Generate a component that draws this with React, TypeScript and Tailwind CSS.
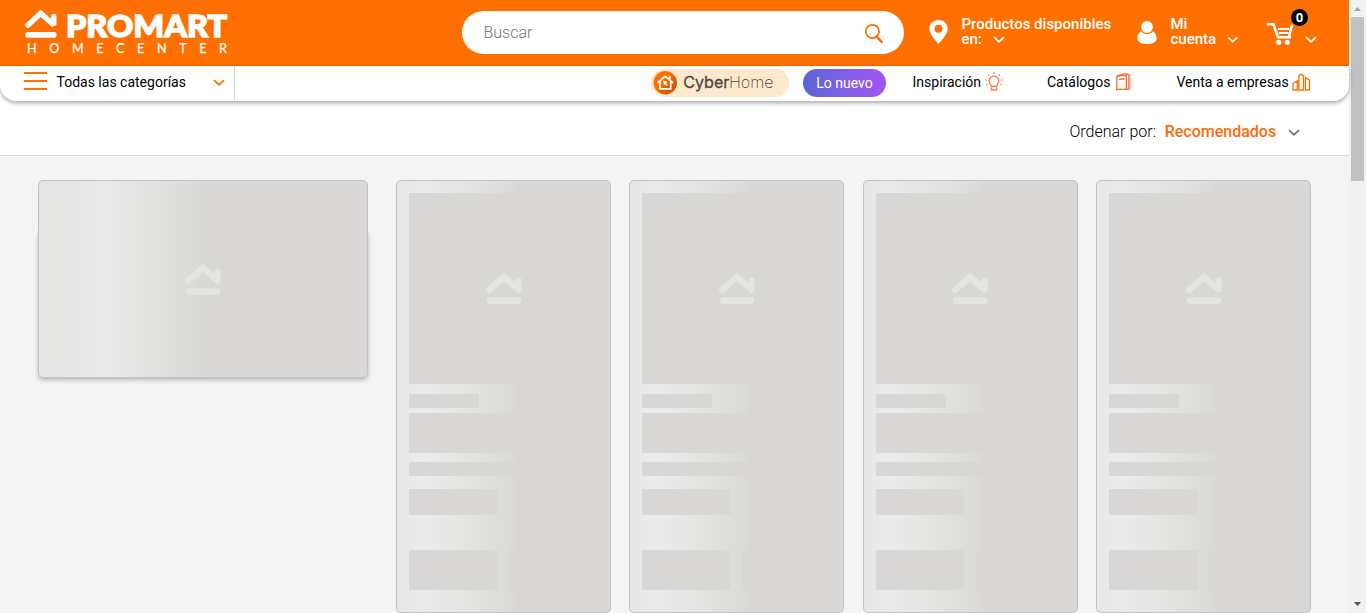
import React from "react";

function Chevron({ className = "" }: { className?: string }) {
  return (
    <svg className={className} width="12" height="8" viewBox="0 0 12 8" fill="none" stroke="currentColor" strokeWidth="1.8">
      <path d="M1 1.2 6 5.7l5-4.5" />
    </svg>
  );
}

function HouseMark({ className = "" }: { className?: string }) {
  return (
    <svg className={className} width="36" height="33" viewBox="0 0 36 33" fill="none" stroke="currentColor">
      <path d="M3.2 17.8 18 5l14.6 12.6V8.6" strokeWidth="6.4" strokeLinecap="round" strokeLinejoin="round" />
      <path d="M13 5.6 18 .8l5 4.8Z" fill="currentColor" stroke="none" />
      <path d="M4.2 28.6h27.6" strokeWidth="6.8" strokeLinecap="round" />
    </svg>
  );
}

function Logo() {
  return (
    <svg className="mt-[8px] ml-[24px] block" width="212" height="54" viewBox="0 0 212 54">
      <g fill="none" stroke="#fff" strokeLinecap="round">
        <path d="M3.8 17.2 16.7 5.2l13.1 11.8V8.4" strokeWidth="5.4" strokeLinejoin="miter" strokeMiterlimit="2" />
        <path d="M4.2 26.9h25.6" strokeWidth="5.6" />
      </g>
      <text x="42" y="28.6" fill="#fff" stroke="#fff" strokeWidth="1.4" fontFamily="Lato, sans-serif" fontWeight="900" fontSize="29.5" textLength="161" lengthAdjust="spacingAndGlyphs">PROMART</text>
      <text x="3" y="44.8" fill="#fff" stroke="#fff" strokeWidth=".25" fontFamily="Lato, sans-serif" fontWeight="400" fontSize="12.6" textLength="200" lengthAdjust="spacing">HOMECENTER</text>
    </svg>
  );
}

function Header() {
  return (
    <header className="flex h-[66px] border-b border-[#ec6500] bg-[#ff7000] text-white">
      <div className="w-[462px]"><Logo /></div>
      <div className="mt-[11px] flex h-[43px] w-[442px] justify-between rounded-full bg-white pt-[10px] pr-[20px] pl-[21.5px]">
        <span className="text-[16px] leading-[24px] font-light text-[#757575]">Buscar</span>
        <svg className="mt-[2px]" width="20" height="22" viewBox="0 0 20 22" fill="none" stroke="#ff7000">
          <circle cx="8.4" cy="8.4" r="6.6" strokeWidth="1.8" />
          <path d="m12.5 13.6 5.2 5.2" strokeWidth="2.6" strokeLinecap="round" />
        </svg>
      </div>
      <svg className="mt-[20px] ml-[25px]" width="19" height="24" viewBox="0 0 19 24" fill="#fff">
        <path fillRule="evenodd" d="M9.5 0C4.2 0 .3 3.8.3 8.8c0 5.3 6.5 12 9.2 15.2 2.7-3.2 9.2-9.9 9.2-15.2C18.7 3.8 14.8 0 9.5 0Zm0 4.7a4 4 0 1 1 0 8 4 4 0 0 1 0-8Z" />
      </svg>
      <div className="mt-[17px] ml-[13.5px] w-[174.5px] text-[15px] leading-[15px] font-medium">
        <div className="whitespace-nowrap">Productos disponibles</div>
        <div className="flex">en:<Chevron className="mt-[4px] ml-[11px]" /></div>
      </div>
      <svg className="mt-[21px] ml-[1px]" width="20" height="23" viewBox="0 0 20 23" fill="#fff">
        <ellipse cx="10" cy="6" rx="5.9" ry="6" />
        <path d="M4 10.2C1.8 11.6.3 14.6.3 17.2.3 20.8 4.5 23 10 23s9.7-2.2 9.7-5.8c0-2.6-1.5-5.6-3.7-7-1.4 1.8-3.5 2.9-6 2.9s-4.6-1.1-6-2.9Z" />
      </svg>
      <div className="mt-[17px] ml-[13.5px] w-[67.5px] text-[15px] leading-[15px] font-medium">
        <div>Mi</div>
        <div className="flex">cuenta<Chevron className="mt-[4px] ml-[10.5px]" /></div>
      </div>
      <div className="relative mt-[22px] ml-[28px] flex h-[25px]">
        <svg width="29" height="24" viewBox="0 0 29 24" fill="none" stroke="#fff">
          <path d="M2 2.2h5.5l4.5 13h12" strokeWidth="2.6" strokeLinecap="round" strokeLinejoin="round" />
          <path d="M25.8 3.6 23 15" strokeWidth="2.6" strokeLinecap="round" />
          <path d="M12 7h11M13 11h9.5" strokeWidth="1.9" />
          <circle cx="12.8" cy="20.3" r="2.6" fill="#fff" stroke="none" />
          <circle cx="21.3" cy="20.3" r="2.6" fill="#fff" stroke="none" />
        </svg>
        <span className="absolute -top-[13px] left-[25px] flex h-[17px] w-[17px] items-center justify-center rounded-full bg-black text-[13px] leading-none font-bold">0</span>
        <Chevron className="mt-[14px] ml-[10px]" />
      </div>
    </header>
  );
}

function CyberHome() {
  return (
    <svg className="mt-[3px]" width="138" height="28" viewBox="0 0 138 28">
      <defs>
        <linearGradient id="disc" x1="0" y1="0" x2="1" y2="1">
          <stop offset=".45" stopColor="#ff7000" /><stop offset=".6" stopColor="#e06000" /><stop offset="1" stopColor="#c45000" />
        </linearGradient>
      </defs>
      <rect width="138" height="28" rx="14" fill="#ffe8cc" />
      <circle cx="14.3" cy="13.7" r="11.7" fill="url(#disc)" />
      <path d="m7 13.5 7.3-6.4 7.3 6.4M9 12.5v7.4h10.7v-7.4M18.8 10V7.6" fill="none" stroke="#fff" strokeWidth="1.7" strokeLinecap="round" strokeLinejoin="round" />
      <path d="m12 11.5 4.8 1.8-2 .8 2 2-.9.9-2-2-.8 1.6Z" fill="#fff" />
      <text y="18.8" fontFamily="Inter, sans-serif" fontSize="15.8" fill="#4a4540">
        <tspan x="32.3" fontWeight="400" stroke="#4a4540" strokeWidth=".3" textLength="46" lengthAdjust="spacingAndGlyphs">Cyber</tspan>
        <tspan x="78" fontWeight="200" textLength="44.5" lengthAdjust="spacingAndGlyphs">Home</tspan>
      </text>
    </svg>
  );
}

function Nav() {
  return (
    <nav className="relative flex h-[35px] rounded-b-[16px] bg-white text-[14px] leading-[16px] text-black shadow-[0_2px_4px_rgba(0,0,0,0.35)]">
      <div className="flex h-[34px] w-[235px] border-r border-[#d8d8d8] pl-[24px]">
        <svg className="mt-[6px]" width="23" height="18" viewBox="0 0 23 18" stroke="#ff7000" strokeWidth="2">
          <path d="M0 1h23M0 9h23M0 17h23" />
        </svg>
        <span className="mt-[8px] ml-[9.5px] w-[156.5px]">Todas las categorías</span>
        <Chevron className="mt-[13px] text-[#ff7000]" />
      </div>
      <div className="ml-[416px]"><CyberHome /></div>
      <div className="mt-[3px] ml-[14px] h-[28px] w-[83px] rounded-full bg-gradient-to-r from-[#5965d6] to-[#a254f2] pt-[6px] text-center text-white">Lo nuevo</div>
      <div className="mt-[8px] ml-[26.5px] flex w-[134.5px]">
        <span>Inspiración</span>
        <svg className="-mt-[2px] ml-[4px]" width="18" height="19" viewBox="0 0 18 19" fill="none" stroke="#ff7038" strokeWidth="1.2">
          <path d="M6.3 14.3c0-2-2.2-2.5-2.2-5.3a4.9 4.9 0 0 1 9.8 0c0 2.8-2.2 3.3-2.2 5.3ZM6.3 15.2v2.6h5.4v-2.6M9 .3v1.8M3.2 2.4l1.1 1.3M14.8 2.4l-1.1 1.3M.3 8h1.9M15.8 8h1.9M1.3 13l1.3-.7M16.7 13l-1.3-.7" />
        </svg>
      </div>
      <div className="mt-[8px] flex w-[129.5px]">
        <span>Catálogos</span>
        <svg className="-mt-[1px] ml-[6px]" width="15" height="18" viewBox="0 0 15 18" fill="none" stroke="#ff6a30" strokeWidth="1.3">
          <path d="M1 3.1c2 .5 3.3-.6 5-.6 1.8 0 2.9.5 4.4 0V16c-3.1.8-6.3-.3-9.8.7ZM1.3 2.4c3-.2 3.8-1.5 10-1.5l1.5 1.2V16l-2.4.5" />
          <path d="M13.7 1.1v15.5" stroke="#ff9aa6" strokeWidth="1.7" /><path d="M3 6.7c2-1.1 3.5-.4 5.5-.9" />
        </svg>
      </div>
      <div className="mt-[8px] flex">
        <span className="whitespace-nowrap">Venta a empresas</span>
        <svg className="-mt-[1px] ml-[3.5px]" width="19" height="19" viewBox="0 0 19 19" fill="none" stroke="#ff7000" strokeWidth="1.3">
          <path d="M1 10.5 5.3 8v9H1ZM6.8 3 9 1l2.5 2v14H6.8ZM13.5 4.5l4 2.7V17h-4Z" />
        </svg>
      </div>
    </nav>
  );
}

function SortBar() {
  return (
    <div className="flex h-[55px] border-b border-[#d9d9d9] bg-white pt-[20px] pl-[1069.5px] text-[16px] leading-[22px]">
      <span className="w-[95.2px] font-light text-black">Ordenar por:</span>
      <span className="font-medium text-[#ff6a0d]">Recomendados</span>
      <Chevron className="mt-[7.5px] ml-[12px] text-[#777]" />
    </div>
  );
}

function BannerSkeleton() {
  return (
    <div className="relative h-[198px] w-[330px]">
      <div className="absolute inset-x-0 top-[50px] bottom-0 rounded-[5px] shadow-[0_2px_4px_rgba(0,0,0,0.25)]" />
      <div className="relative flex h-[198px] justify-center rounded-[5px] border border-[#c2c2c2] bg-[linear-gradient(90deg,#e4e4e2_0%,#ebebeb_20%,#e3e3e1_32%,#d9d8d6_51%)] pt-[82px]">
        <HouseMark className="text-[#e4e4e2]" />
      </div>
    </div>
  );
}

function ProductSkeleton() {
  return (
    <div className="h-[433px] w-[215px] rounded-[5px] border border-[#c2c2c2] bg-[linear-gradient(90deg,#e7e7e6_0px,#ebebeb_25px,#e3e3e1_72px,#dbdad8_118px,#d9d8d6_118px)] px-[12px] pt-[12px]">
      <div className="flex h-[191px] justify-center bg-[#d9d8d6] pt-[79px]">
        <HouseMark className="text-[#e4e4e2]" />
      </div>
      <div className="mt-[10px] h-[14px] w-[70px] bg-[#d9d8d6]" />
      <div className="mt-[5px] h-[40px] bg-[#d9d8d6]" />
      <div className="mt-[9px] h-[14px] bg-[#d9d8d6]" />
      <div className="mt-[13px] h-[26px] w-[88.7px] bg-[#d9d8d6]" />
      <div className="mt-[35px] flex h-[40px] justify-between">
        <div className="w-[88.7px] bg-[#d9d8d6]" />
        <div className="w-[89px] bg-[#d9d8d6]" />
      </div>
    </div>
  );
}

function Scrollbar() {
  return (
    <div className="flex w-[17px] flex-col items-center justify-between bg-[#f1f1f1]">
      <div className="flex flex-col items-center">
        <svg width="17" height="17" viewBox="0 0 17 17"><path d="M5 11h7L8.5 7Z" fill="#a3a3a3" /></svg>
        <div className="h-[164px] w-[13px] bg-[#c1c1c1]" />
      </div>
      <svg width="17" height="17" viewBox="0 0 17 17"><path d="M5 6h7L8.5 10Z" fill="#505050" /></svg>
    </div>
  );
}

export default function App() {
  return (
    <div className="flex h-[613px] w-[1366px] overflow-hidden font-['Roboto',sans-serif]">
      <div className="w-[1349px] bg-[#f4f4f4]">
        <Header />
        <div className="bg-white"><Nav /></div>
        <SortBar />
        <main className="flex pt-[24px] pl-[38px]">
          <BannerSkeleton />
          <div className="ml-[28px] flex gap-[18.4px]">
            {[0, 1, 2, 3].map((i) => <ProductSkeleton key={i} />)}
          </div>
        </main>
      </div>
      <Scrollbar />
    </div>
  );
}
